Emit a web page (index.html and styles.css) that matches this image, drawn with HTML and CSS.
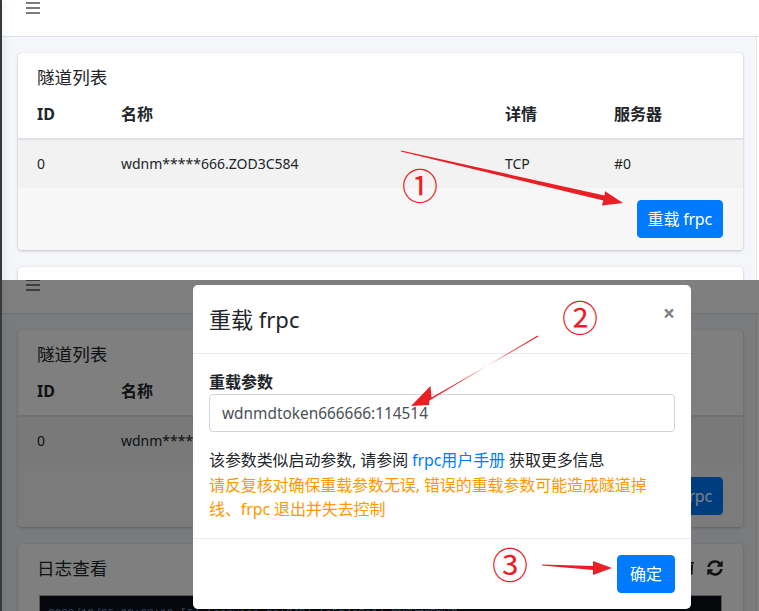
FILE: index.html
```html
<!DOCTYPE html>
<html lang="zh-CN">
<head>
<meta charset="utf-8">
<title>重载 frpc</title>
<link rel="stylesheet" href="styles.css">
</head>
<body>
  <div class="shot shot-top">
    <div class="page">
      <div class="sidebar-edge"></div>
      <div class="main">
        <div class="navbar"><div class="hamburger"><i></i><i></i><i></i></div></div>
        <div class="content">
          <div class="card">
            <div class="card-header"><h3 class="card-title">隧道列表</h3></div>
            <table class="table">
              <colgroup><col class="c1"><col class="c2"><col class="c3"><col class="c4"></colgroup>
              <thead><tr><th>ID</th><th>名称</th><th>详情</th><th>服务器</th></tr></thead>
              <tbody><tr><td>0</td><td>wdnm*****666.ZOD3C584</td><td>TCP</td><td>#0</td></tr></tbody>
            </table>
            <div class="card-footer"><button class="btn btn-reload">重载 frpc</button></div>
          </div>
          <div class="card">
            <div class="card-header header-tools">
              <h3 class="card-title">日志查看</h3>
              <div class="tools">
                <svg class="tool-icon" viewBox="0 0 448 512" width="12" height="14"><path fill="#212529" d="M432 32H312l-9.4-18.7A24 24 0 0 0 281.1 0H166.8a23.7 23.7 0 0 0-21.4 13.3L136 32H16A16 16 0 0 0 0 48v32a16 16 0 0 0 16 16h416a16 16 0 0 0 16-16V48a16 16 0 0 0-16-16zM53.2 467a48 48 0 0 0 47.9 45h245.8a48 48 0 0 0 47.9-45L416 128H32z"/></svg>
                <svg class="tool-icon" viewBox="0 0 512 512" width="16" height="16"><path fill="#212529" d="M370.72 133.28C339.458 104.008 298.888 87.962 255.848 88c-77.458.068-144.328 53.178-162.791 126.85-1.344 5.363-6.122 9.15-11.651 9.15H24.103c-7.498 0-13.194-6.807-11.807-14.176C33.933 94.924 134.813 8 256 8c66.448 0 126.791 26.136 171.315 68.685L463.03 40.97C478.149 25.851 504 36.559 504 57.941V192c0 13.255-10.745 24-24 24H345.941c-21.382 0-32.09-25.851-16.971-40.971l41.75-41.749zM32 296h134.059c21.382 0 32.09 25.851 16.971 40.971l-41.75 41.75c31.262 29.273 71.835 45.319 114.876 45.28 77.418-.07 144.315-53.144 162.787-126.849 1.344-5.363 6.122-9.15 11.651-9.15h57.304c7.498 0 13.194 6.807 11.807 14.176C478.067 417.076 377.187 504 256 504c-66.448 0-126.791-26.136-171.315-68.685L48.97 471.03C33.851 486.149 8 475.441 8 454.059V320c0-13.255 10.745-24 24-24z"/></svg>
              </div>
            </div>
            <div class="card-body">
              <div class="log">2020/12/05 03:03:10 [I] [service.go:249] [a5f4c0e1] 隧道启动成功</div>
            </div>
          </div>
        </div>
      </div>
    </div>
  </div>

  <div class="shot shot-bottom">
    <div class="page shift">
      <div class="sidebar-edge"></div>
      <div class="main">
        <div class="navbar"><div class="hamburger"><i></i><i></i><i></i></div></div>
        <div class="content">
          <div class="card">
            <div class="card-header"><h3 class="card-title">隧道列表</h3></div>
            <table class="table">
              <colgroup><col class="c1"><col class="c2"><col class="c3"><col class="c4"></colgroup>
              <thead><tr><th>ID</th><th>名称</th><th>详情</th><th>服务器</th></tr></thead>
              <tbody><tr><td>0</td><td>wdnm*****666.ZOD3C584</td><td>TCP</td><td>#0</td></tr></tbody>
            </table>
            <div class="card-footer"><button class="btn btn-reload">重载 frpc</button></div>
          </div>
          <div class="card">
            <div class="card-header header-tools">
              <h3 class="card-title">日志查看</h3>
              <div class="tools">
                <svg class="tool-icon" viewBox="0 0 448 512" width="12" height="14"><path fill="#212529" d="M432 32H312l-9.4-18.7A24 24 0 0 0 281.1 0H166.8a23.7 23.7 0 0 0-21.4 13.3L136 32H16A16 16 0 0 0 0 48v32a16 16 0 0 0 16 16h416a16 16 0 0 0 16-16V48a16 16 0 0 0-16-16zM53.2 467a48 48 0 0 0 47.9 45h245.8a48 48 0 0 0 47.9-45L416 128H32z"/></svg>
                <svg class="tool-icon" viewBox="0 0 512 512" width="16" height="16"><path fill="#212529" d="M370.72 133.28C339.458 104.008 298.888 87.962 255.848 88c-77.458.068-144.328 53.178-162.791 126.85-1.344 5.363-6.122 9.15-11.651 9.15H24.103c-7.498 0-13.194-6.807-11.807-14.176C33.933 94.924 134.813 8 256 8c66.448 0 126.791 26.136 171.315 68.685L463.03 40.97C478.149 25.851 504 36.559 504 57.941V192c0 13.255-10.745 24-24 24H345.941c-21.382 0-32.09-25.851-16.971-40.971l41.75-41.749zM32 296h134.059c21.382 0 32.09 25.851 16.971 40.971l-41.75 41.75c31.262 29.273 71.835 45.319 114.876 45.28 77.418-.07 144.315-53.144 162.787-126.849 1.344-5.363 6.122-9.15 11.651-9.15h57.304c7.498 0 13.194 6.807 11.807 14.176C478.067 417.076 377.187 504 256 504c-66.448 0-126.791-26.136-171.315-68.685L48.97 471.03C33.851 486.149 8 475.441 8 454.059V320c0-13.255 10.745-24 24-24z"/></svg>
              </div>
            </div>
            <div class="card-body">
              <div class="log">2020/12/05 03:03:10 [I] [service.go:249] [a5f4c0e1] 隧道启动成功</div>
            </div>
          </div>
        </div>
      </div>
    </div>
    <div class="backdrop"></div>
    <div class="modal">
      <div class="modal-header">
        <h4 class="modal-title">重载 frpc</h4>
        <span class="close">×</span>
      </div>
      <div class="modal-body">
        <label class="label">重载参数</label>
        <input class="input" type="text" value="wdnmdtoken666666:114514">
        <div class="help">
          该参数类似启动参数, 请参阅 <a href="#">frpc用户手册</a> 获取更多信息<br>
          <span class="warn">请反复核对确保重载参数无误, 错误的重载参数可能造成隧道掉<br>线、frpc 退出并失去控制</span>
        </div>
      </div>
      <div class="modal-footer"><button class="btn">确定</button></div>
    </div>
  </div>

  <svg class="annot" viewBox="0 0 759 611" width="759" height="611">
    <polygon points="401.1,150.5 604.5,195.5 605.1,191.2 623,203 601.9,205.6 603.3,200.6 400.9,151.5"/>
    <polygon points="538.4,336.6 431.5,397.6 430.5,386 411,406 429,405 429.5,400.5 537.6,335.4"/>
    <polygon points="542,564.6 593,566 593,561 612,568 593,575 593,570 542,565.6"/>
    <text x="420" y="200" class="num">①</text>
    <text x="580" y="332" class="num">②</text>
    <text x="510" y="579" class="num">③</text>
  </svg>
</body>
</html>
```

FILE: styles.css
```css
* { box-sizing: border-box; }
html, body { margin: 0; padding: 0; }
body {
  width: 759px;
  height: 611px;
  overflow: hidden;
  position: relative;
  background: #f4f6f9;
  color: #212529;
  font-family: "Noto Sans", "Noto Sans CJK SC", sans-serif;
  font-size: 16px;
}

.shot { position: relative; overflow: hidden; }
.shot-top { height: 280px; }
.shot-bottom { height: 331px; }

.page { display: flex; height: 700px; background: #f4f6f9; }
.page.shift { margin-top: -3px; }

.sidebar-edge {
  flex: none;
  width: 2px;
  background: #343a40;
  box-shadow: 2px 0 6px rgba(0, 0, 0, .12);
  position: relative;
  z-index: 1;
}

.main { flex: 1; display: flex; flex-direction: column; min-width: 0; }

.navbar {
  flex: none;
  height: 37px;
  background: #fff;
  border-bottom: 1px solid #dee2e6;
  padding: 2px 0 0 24px;
}
.hamburger { width: 14px; display: flex; flex-direction: column; gap: 3px; }
.hamburger i { display: block; height: 2px; background: #7b7b7b; }

.content {
  flex: 1;
  padding: 16px 14px 0 16px;
  display: flex;
  flex-direction: column;
  gap: 17px;
  border-right: 2px solid #fff;
  box-shadow: inset -1px 0 0 #e4e6ea;
}

.card {
  background: #fff;
  border-radius: 4px;
  box-shadow: 0 0 1px rgba(0, 0, 0, .125), 0 1px 3px rgba(0, 0, 0, .2);
}
.card-header { padding: 13px 19px 2px; }
.card-title { margin: 0; font-size: 17.6px; line-height: 22px; font-weight: 400; }
.header-tools { display: flex; justify-content: space-between; align-items: center; padding-right: 20px; }
.tools { display: flex; align-items: center; gap: 13px; }
.tool-icon { display: block; }

.table { width: 100%; border-collapse: collapse; table-layout: fixed; }
.c1 { width: 84px; }
.c2 { width: 384px; }
.c3 { width: 109px; }
.c4 { width: 148px; }
.table th {
  text-align: left;
  padding: 12px 19px;
  line-height: 24px;
  font-size: 16px;
  font-weight: 700;
  border-bottom: 2px solid #dee2e6;
}
.table td {
  padding: 12px 19px;
  line-height: 24px;
  font-size: 14px;
  background: #f2f2f2;
  white-space: nowrap;
}

.card-footer {
  background: #f7f7f7;
  padding: 12px 20px;
  display: flex;
  justify-content: flex-end;
  border-radius: 0 0 4px 4px;
}

.btn {
  background: #007bff;
  color: #fff;
  border: 1px solid #007bff;
  border-radius: 4px;
  padding: 6px 12px;
  font-family: inherit;
  font-size: 16px;
  line-height: 24px;
}
.btn-reload { padding: 6px 10px; letter-spacing: -0.2px; }

.card-body { padding: 14px 21px 20px; }
.log {
  background: #0d1117;
  border: 1px solid #a8a8a8;
  height: 200px;
  padding: 9px 8px;
  color: #5b8fd0;
  font-family: "Liberation Mono", "Noto Sans CJK SC", monospace;
  font-size: 11px;
  line-height: 16px;
}

.backdrop {
  position: absolute;
  inset: 0;
  background: rgba(0, 0, 0, .5);
}

.modal {
  position: absolute;
  left: 193px;
  top: 5px;
  width: 498px;
  background: #fff;
  border-radius: 5px;
}
.modal-header {
  display: flex;
  justify-content: space-between;
  align-items: flex-start;
  padding: 19px 16px;
  border-bottom: 1px solid #e9ecef;
}
.modal-title { margin: 0; font-size: 22px; line-height: 30px; font-weight: 400; }
.close {
  font-size: 21px;
  font-weight: 700;
  line-height: 21px;
  color: #808080;
  margin-top: -1px;
}
.modal-body { padding: 16px; }
.label { display: block; font-weight: 700; font-size: 16px; line-height: 24px; }
.input {
  display: block;
  width: 100%;
  height: 38px;
  padding: 6px 12px;
  font-family: inherit;
  font-size: 15.4px;
  line-height: 24px;
  color: #495057;
  border: 1px solid #ced4da;
  border-radius: 4px;
}
.help { margin-top: 16px; font-size: 16px; line-height: 24.5px; letter-spacing: -0.1px; }
.help a { color: #007bff; text-decoration: none; }
.warn { color: #ff9800; }
.modal-footer {
  border-top: 1px solid #e9ecef;
  padding: 16px;
  display: flex;
  justify-content: flex-end;
}

.annot { position: absolute; left: 0; top: 0; pointer-events: none; }
.annot polygon { fill: #ea1f26; }
.num {
  fill: #ea1f26;
  font-family: "Noto Sans CJK SC", sans-serif;
  font-size: 36px;
  text-anchor: middle;
}
```
